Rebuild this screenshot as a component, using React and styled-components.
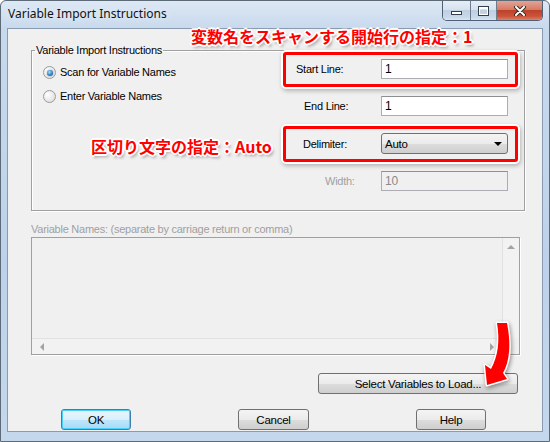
import React from "react";
import styled, { createGlobalStyle, css } from "styled-components";

const GlobalStyle = createGlobalStyle`
  html, body {
    margin: 0;
    padding: 0;
    background: #ffffff;
  }
  body {
    font-family: "Liberation Sans", Arial, sans-serif;
  }
`;

const Window = styled.div`
  position: relative;
  width: 550px;
  height: 442px;
  box-sizing: border-box;
  border: 1px solid #5d6a78;
  border-radius: 6px 6px 0 0;
  background: linear-gradient(#dde8f4, #c7d9ed 28px, #bdd2ea 60%, #c4d7ec);
  display: flex;
  flex-direction: column;
  overflow: hidden;
`;

const TitleBar = styled.div`
  height: 27px;
  display: flex;
  align-items: flex-start;
  padding: 0 6px 0 7px;
`;

const Title = styled.span`
  font-family: "Noto Sans", "Open Sans", sans-serif;
  font-size: 12px;
  line-height: 26px;
  color: #111;
  text-shadow: 0 0 8px rgba(255, 255, 255, 0.9);
`;

const CaptionButtons = styled.div`
  margin-left: auto;
  display: flex;
  height: 19px;
  border: 1px solid #4f5f74;
  border-top: none;
  border-radius: 0 0 5px 5px;
  overflow: hidden;
`;

const CaptionButton = styled.div`
  width: ${(p) => p.$w}px;
  height: 19px;
  display: flex;
  align-items: center;
  justify-content: center;
  border-left: ${(p) => (p.$first ? "none" : "1px solid #6d7c8e")};
  background: ${(p) =>
    p.$close
      ? "linear-gradient(#e5a293, #d47c66 45%, #c0412a 50%, #c9543a 80%, #dc8266)"
      : "linear-gradient(#e6eef7, #d6e2ef 45%, #bfd0e3 50%, #c9d8e9 85%, #dbe6f2)"};
`;

const MinGlyph = styled.div`
  width: 9px;
  height: 2px;
  margin-top: 5px;
  background: #fff;
  border: 1px solid #333f4f;
`;

const MaxGlyph = styled.div`
  width: 7px;
  height: 5px;
  border: 1px solid #fff;
  border-top-width: 2px;
  outline: 1px solid #333f4f;
`;

const Client = styled.div`
  flex: 1;
  margin: 0 6px 9px 6px;
  border: 1px solid #8a9bb0;
  background: #f0f0f0;
  display: flex;
  flex-direction: column;
  padding: 0 18px 0 23px;
  font-size: 11px;
  letter-spacing: -0.25px;
  color: #000;
`;

const GroupBox = styled.fieldset`
  margin: 15px 0 0 0;
  padding: 0;
  width: 494px;
  height: 167px;
  box-sizing: border-box;
  border: 1px solid #a0a0a0;
  box-shadow: inset 1px 1px 0 #fff, 1px 1px 0 #fff;
  display: flex;
`;

const Legend = styled.legend`
  margin-left: 3px;
  padding: 0 1px;
  line-height: 13px;
`;

const RadioList = styled.div`
  display: flex;
  flex-direction: column;
  gap: 11px;
  padding: 9px 0 0 11px;
`;

const RadioRow = styled.label`
  display: flex;
  align-items: center;
  gap: 4px;
  height: 13px;
  line-height: 13px;
`;

const RadioCircle = styled.span`
  width: 11px;
  height: 11px;
  border-radius: 50%;
  border: 1px solid #9c9c9c;
  background: radial-gradient(circle at 35% 35%, #ffffff, #d6d6d6);
  display: flex;
  align-items: center;
  justify-content: center;
  ${(p) =>
    p.$checked &&
    css`
      &::after {
        content: "";
        width: 6px;
        height: 6px;
        border-radius: 50%;
        background: radial-gradient(circle at 40% 35%, #9fdcff, #2b7cc0 60%, #184f82);
        box-shadow: 0 0 1px #134067;
      }
    `}
`;

const FieldGrid = styled.div`
  margin-left: auto;
  margin-right: 16px;
  padding-top: 2px;
  display: flex;
  flex-direction: column;
  gap: 17px;
`;

const FieldRow = styled.div`
  position: relative;
  display: grid;
  grid-template-columns: 98px 127px;
  align-items: center;
  ${(p) =>
    p.$highlight &&
    css`
      &::after {
        content: "";
        position: absolute;
        top: -7px;
        left: 0;
        right: -10px;
        bottom: -8px;
        border: 3px solid #ff0000;
        border-radius: 3px;
        box-shadow: 0 0 0 2px #fff, 1px 2px 4px 2px rgba(0, 0, 0, 0.25);
        pointer-events: none;
      }
    `}
`;

const FieldLabel = styled.span`
  padding-left: ${(p) => p.$indent}px;
  color: ${(p) => (p.$disabled ? "#a0a0a0" : "#000")};
`;

const TextBox = styled.div`
  height: 20px;
  box-sizing: border-box;
  border: 1px solid #abadb3;
  border-top-color: #8e8f8f;
  background: ${(p) => (p.$disabled ? "#f0f0f0" : "#fff")};
  color: ${(p) => (p.$disabled ? "#8a8a8a" : "#000")};
  padding: 0 3px;
  line-height: 18px;
  font-size: 12px;
`;

const Select = styled.div`
  height: 21px;
  box-sizing: border-box;
  border: 1px solid #707070;
  border-radius: 3px;
  background: linear-gradient(#f4f4f4, #ebebeb 50%, #dddddd 51%, #cfcfcf);
  display: flex;
  align-items: center;
  padding: 0 5px 0 3px;
  font-size: 11.5px;
`;

const SelectArrow = styled.span`
  margin-left: auto;
  width: 0;
  height: 0;
  border-left: 4px solid transparent;
  border-right: 4px solid transparent;
  border-top: 4px solid #000;
`;

const NamesLabel = styled.div`
  margin-top: 12px;
  line-height: 13px;
  color: #a0a0a0;
`;

const ListBox = styled.div`
  margin-top: 1px;
  width: 489px;
  height: 118px;
  box-sizing: border-box;
  border: 1px solid #a0a0a0;
  box-shadow: 1px 1px 0 #fff;
  display: grid;
  grid-template-columns: 1fr 17px;
  grid-template-rows: 1fr 16px;
  background: #f0f0f0;
`;

const ScrollTrack = styled.div`
  background: #f2f2f2;
  display: flex;
  ${(p) =>
    p.$vertical
      ? css`
          border-left: 1px solid #e2e2e2;
          flex-direction: column;
          align-items: center;
          padding-top: 7px;
        `
      : css`
          border-top: 1px solid #e2e2e2;
          align-items: center;
          justify-content: space-between;
          padding: 0 8px;
        `}
`;

const Corner = styled.div`
  background: #f0f0f0;
`;

const Arrow = styled.span`
  width: 0;
  height: 0;
  ${(p) =>
    p.$dir === "up" &&
    css`
      border-left: 4px solid transparent;
      border-right: 4px solid transparent;
      border-bottom: 4px solid #a3a3a3;
    `}
  ${(p) =>
    p.$dir === "left" &&
    css`
      border-top: 4px solid transparent;
      border-bottom: 4px solid transparent;
      border-right: 4px solid #a3a3a3;
    `}
  ${(p) =>
    p.$dir === "right" &&
    css`
      border-top: 4px solid transparent;
      border-bottom: 4px solid transparent;
      border-left: 4px solid #a3a3a3;
    `}
`;

const Button = styled.div`
  width: ${(p) => p.$w}px;
  height: ${(p) => p.$h}px;
  box-sizing: border-box;
  border: 1px solid #707070;
  border-radius: 3px;
  background: linear-gradient(#f4f4f4, #ebebeb 50%, #dddddd 51%, #cfcfcf);
  display: flex;
  align-items: center;
  justify-content: center;
  font-size: 11.5px;
  ${(p) =>
    p.$default &&
    css`
      border-color: #3c7fb1;
      background: linear-gradient(#eaf6fd, #d9f0fc 50%, #bee6fd 51%, #a7d9f5);
      box-shadow: inset 0 0 0 1px #48d1fd;
    `}
`;

const SelectRow = styled.div`
  margin-top: 18px;
  margin-left: 287px;
`;

const ButtonRow = styled.div`
  margin-top: 15px;
  padding-left: 30px;
  display: flex;
  gap: 107px;
`;

const Annotation = styled.div`
  position: absolute;
  left: ${(p) => p.$x}px;
  top: ${(p) => p.$y}px;
  font-family: "Noto Sans CJK JP", "Noto Sans", sans-serif;
  font-weight: 700;
  font-size: 16px;
  line-height: 20px;
  color: #ff0000;
  white-space: nowrap;
  text-shadow: -1px -1px 0 #fff, 1px -1px 0 #fff, -1px 1px 0 #fff, 1px 1px 0 #fff,
    0 -2px 0 #fff, 0 2px 0 #fff, -2px 0 0 #fff, 2px 0 0 #fff,
    2px 3px 3px rgba(0, 0, 0, 0.35);
`;

const CurvedArrow = styled.svg`
  position: absolute;
  left: 478px;
  top: 316px;
  overflow: visible;
  filter: drop-shadow(1px 2px 2px rgba(0, 0, 0, 0.4));
`;

const App = () => {
  return (
    <>
      <GlobalStyle />
      <Window>
        <TitleBar>
          <Title>Variable Import Instructions</Title>
          <CaptionButtons>
            <CaptionButton $w={27} $first>
              <MinGlyph />
            </CaptionButton>
            <CaptionButton $w={25}>
              <MaxGlyph />
            </CaptionButton>
            <CaptionButton $w={45} $close>
              <svg width="12" height="10" viewBox="0 0 12 10">
                <path
                  d="M2 1 L10 9 M10 1 L2 9"
                  stroke="#3a2a26"
                  strokeWidth="4"
                  strokeLinecap="round"
                />
                <path
                  d="M2 1 L10 9 M10 1 L2 9"
                  stroke="#fff"
                  strokeWidth="2"
                  strokeLinecap="round"
                />
              </svg>
            </CaptionButton>
          </CaptionButtons>
        </TitleBar>
        <Client>
          <GroupBox>
            <Legend>Variable Import Instructions</Legend>
            <RadioList>
              <RadioRow>
                <RadioCircle $checked />
                Scan for Variable Names
              </RadioRow>
              <RadioRow>
                <RadioCircle />
                Enter Variable Names
              </RadioRow>
            </RadioList>
            <FieldGrid>
              <FieldRow $highlight>
                <FieldLabel $indent={13}>Start Line:</FieldLabel>
                <TextBox>1</TextBox>
              </FieldRow>
              <FieldRow>
                <FieldLabel $indent={21}>End Line:</FieldLabel>
                <TextBox>1</TextBox>
              </FieldRow>
              <FieldRow $highlight>
                <FieldLabel $indent={20}>Delimiter:</FieldLabel>
                <Select>
                  Auto
                  <SelectArrow />
                </Select>
              </FieldRow>
              <FieldRow>
                <FieldLabel $indent={42} $disabled>
                  Width:
                </FieldLabel>
                <TextBox $disabled>10</TextBox>
              </FieldRow>
            </FieldGrid>
          </GroupBox>
          <NamesLabel>Variable Names: (separate by carriage return or comma)</NamesLabel>
          <ListBox>
            <div />
            <ScrollTrack $vertical>
              <Arrow $dir="up" />
            </ScrollTrack>
            <ScrollTrack>
              <Arrow $dir="left" />
              <Arrow $dir="right" />
            </ScrollTrack>
            <Corner />
          </ListBox>
          <SelectRow>
            <Button $w={200} $h={21}>
              Select Variables to Load...
            </Button>
          </SelectRow>
          <ButtonRow>
            <Button $w={70} $h={21} $default>
              OK
            </Button>
            <Button $w={71} $h={21}>
              Cancel
            </Button>
            <Button $w={70} $h={21}>
              Help
            </Button>
          </ButtonRow>
        </Client>
        <Annotation $x={190} $y={25}>
          変数名をスキャンする開始行の指定：1
        </Annotation>
        <Annotation $x={90} $y={135}>
          区切り文字の指定：Auto
        </Annotation>
        <CurvedArrow width="40" height="75" viewBox="478 316 40 75">
          <path
            d="M496 322 L506 322 C510 342 509 360 502 372 L506 378 L486 384 L484 364 L490 368 C497 355 499 340 496 322 Z"
            fill="#ff0000"
            stroke="#ffffff"
            strokeWidth="3"
            strokeLinejoin="round"
            paintOrder="stroke"
          />
        </CurvedArrow>
      </Window>
    </>
  );
};

export default App;
